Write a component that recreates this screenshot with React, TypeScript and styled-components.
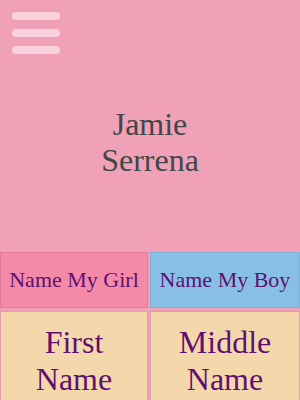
import { createGlobalStyle, styled } from 'styled-components'

const GlobalStyle = createGlobalStyle`
  html, body {
    margin: 0;
    padding: 0;
    background: #f0a1b7;
  }
  * {
    box-sizing: border-box;
  }
`

function App() {
  return (
    <Page>
      <GlobalStyle />
      <Header>
        <MenuButton aria-label="menu">
          <Bar />
          <Bar />
          <Bar />
        </MenuButton>
        <BabyName>
          Jamie
          <br />
          Serrena
        </BabyName>
      </Header>
      <Grid>
        <ChoiceButton $tone="girl">Name My Girl</ChoiceButton>
        <ChoiceButton $tone="boy">Name My Boy</ChoiceButton>
        <NameCell>
          First
          <br />
          Name
        </NameCell>
        <NameCell>
          Middle
          <br />
          Name
        </NameCell>
      </Grid>
    </Page>
  )
}
export default App

const Page = styled.div`
  width: 300px;
  height: 400px;
  overflow: hidden;
  font-family: "Liberation Serif", "Times New Roman", serif;
`

const Header = styled.header`
  height: 252px;
  padding: 12px;
  display: flex;
  flex-direction: column;
`

const MenuButton = styled.div`
  width: 48px;
  display: flex;
  flex-direction: column;
  gap: 9px;
`

const Bar = styled.span`
  display: block;
  height: 8px;
  border-radius: 4px;
  background: #fad2dd;
`

const BabyName = styled.h1`
  margin: 52px 0 0;
  font-family: inherit;
  font-weight: normal;
  font-size: 32px;
  color: #3f4747;
  text-align: center;
  line-height: 36px;
`

const Grid = styled.div`
  display: grid;
  grid-template-columns: 148px 1fr;
  column-gap: 2px;
  row-gap: 3px;
`

const ChoiceButton = styled.div<{ $tone: 'girl' | 'boy' }>`
  height: 56px;
  display: flex;
  align-items: center;
  justify-content: center;
  font-size: 22px;
  color: #5e1070;
  background: ${({ $tone }) => ($tone === 'girl' ? '#f48aa8' : '#88bfe4')};
  border: 1px solid ${({ $tone }) => ($tone === 'girl' ? '#e07c9c' : '#7fb2d6')};
`

const NameCell = styled.div`
  padding: 12px 4px;
  text-align: center;
  font-size: 32px;
  line-height: 37px;
  color: #5e1070;
  background: #f4d8ab;
  border: 1px solid #dca0ac;
  border-bottom: none;
  min-height: 100px;
`
